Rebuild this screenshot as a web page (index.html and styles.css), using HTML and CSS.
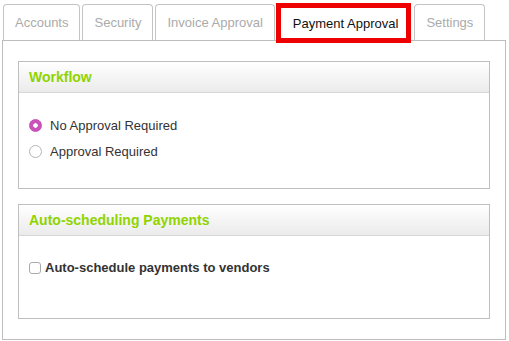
FILE: index.html
```html
<!DOCTYPE html>
<html lang="en">
<head>
  <meta charset="UTF-8" />
  <meta name="viewport" content="width=device-width, initial-scale=1.0" />
  <title>Payment Approval</title>
  <link rel="stylesheet" href="styles.css">
</head>
<body>
  <div class="tabs">
    <a class="tab">Accounts</a>
    <a class="tab">Security</a>
    <a class="tab">Invoice Approval</a>
    <a class="tab active">Payment Approval</a>
    <a class="tab">Settings</a>
  </div>

  <div class="panel">
    <div class="box workflow">
      <div class="box-header">Workflow</div>
      <div class="box-body">
        <label class="option">
          <input type="radio" name="workflow" checked>
          <span>No Approval Required</span>
        </label>
        <label class="option">
          <input type="radio" name="workflow">
          <span>Approval Required</span>
        </label>
      </div>
    </div>

    <div class="box scheduling">
      <div class="box-header">Auto-scheduling Payments</div>
      <div class="box-body">
        <label class="check">
          <input type="checkbox">
          <span>Auto-schedule payments to vendors</span>
        </label>
      </div>
    </div>
  </div>
</body>
</html>
```

FILE: styles.css
```css
* {
  box-sizing: border-box;
}

body {
  margin: 0;
  padding: 4px 3px 1px 2px;
  background: #fff;
  font-family: 'Liberation Sans', Arial, sans-serif;
  font-size: 13px;
  color: #333;
}

.tabs {
  display: flex;
  gap: 2px;
  height: 36px;
  padding-left: 1px;
}

.tab {
  display: flex;
  align-items: center;
  flex-shrink: 0;
  white-space: nowrap;
  padding: 0 11px;
  height: 36px;
  border: 1px solid #c4c4c4;
  border-bottom: none;
  border-radius: 4px 4px 0 0;
  color: #aaa;
  background: #fff;
  cursor: pointer;
}

.tab.active {
  position: relative;
  z-index: 1;
  height: 40px;
  margin: -1px 1px 0 -1px;
  padding: 0 8px 0 12px;
  border: 5px solid #ee0000;
  border-radius: 0;
  color: #111;
}

.panel {
  border: 1px solid #bdbdbd;
  height: 300px;
  padding: 20px 15px;
}

.box {
  border: 1px solid #bfbfbf;
}

.box + .box {
  margin-top: 15px;
}

.workflow {
  height: 128px;
}

.scheduling {
  height: 115px;
}

.box-header {
  height: 31px;
  padding: 0 10px;
  display: flex;
  align-items: center;
  background: linear-gradient(#fff, #ebebeb);
  border-bottom: 1px solid #d6d6d6;
  color: #8fd400;
  font-weight: bold;
  font-size: 14px;
}

.workflow .box-body {
  padding: 22px 10px 0;
  display: flex;
  flex-direction: column;
  gap: 6px;
}

.option {
  display: flex;
  align-items: center;
  gap: 8px;
  height: 20px;
}

.option input {
  appearance: none;
  margin: 0;
  width: 13px;
  height: 13px;
  border: 1px solid #b5b5b5;
  border-radius: 50%;
  background: #fff;
}

.option input:checked {
  border-color: #c64db7;
  background: radial-gradient(circle, #fff 0 2px, #c953bb 2.5px);
}

.scheduling .box-body {
  padding: 24px 10px 0;
}

.check {
  display: flex;
  align-items: center;
  gap: 4px;
  font-weight: bold;
  color: #333;
}

.check input {
  appearance: none;
  margin: 0;
  width: 12px;
  height: 12px;
  border: 1px solid #aaa;
  border-radius: 3px;
  background: #fff;
}
```
